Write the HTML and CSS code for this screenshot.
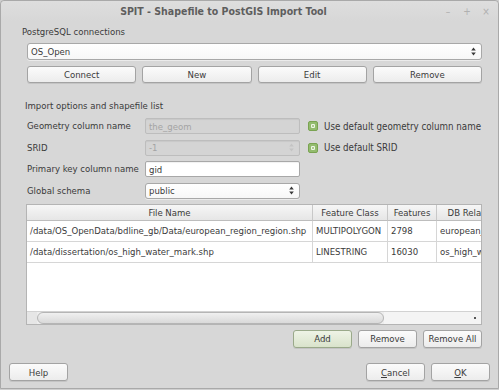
FILE: index.html
```html
<!DOCTYPE html>
<html>
<head>
<meta charset="utf-8">
<link rel="stylesheet" href="styles.css">
</head>
<body>
<div class="window">
  <div class="titlebar">
    <div class="title">SPIT - Shapefile to PostGIS Import Tool</div>
    <div class="controls">
      <span class="ctl">&#8211;</span><span class="ctl">+</span><span class="ctl">&#215;</span>
    </div>
  </div>
  <div class="content">
    <div class="section-label">PostgreSQL connections</div>
    <div class="combo combo-wide">
      <span>OS_Open</span>
      <svg class="arrows" width="5" height="9" viewBox="0 0 5 9"><path d="M2.5 0.5 L4.8 3.5 L0.2 3.5 Z M2.5 8.5 L4.8 5.5 L0.2 5.5 Z" fill="#3a3a3a"/></svg>
    </div>
    <div class="btnrow">
      <div class="btn">Connect</div>
      <div class="btn">New</div>
      <div class="btn">Edit</div>
      <div class="btn">Remove</div>
    </div>
    <div class="group-label">Import options and shapefile list</div>
    <div class="form">
      <div class="flabel">Geometry column name</div>
      <div class="field disabled">the_geom</div>
      <div class="check">
        <svg width="10" height="10" viewBox="0 0 10 10"><rect x="0.5" y="0.5" width="9" height="9" rx="1.5" fill="#93bb6e" stroke="#7aa352"/><rect x="3" y="3" width="4" height="4" fill="#eef5e6"/><path d="M3.6 3.6 L6.4 6.4 M6.4 3.6 L3.6 6.4" stroke="#9cc07a" stroke-width="0.8"/></svg>
        <span>Use default geometry column name</span>
      </div>

      <div class="flabel">SRID</div>
      <div class="field disabled spin">
        <span>-1</span>
        <svg class="arrows" width="5" height="9" viewBox="0 0 5 9"><path d="M2.5 0.5 L4.8 3.5 L0.2 3.5 Z M2.5 8.5 L4.8 5.5 L0.2 5.5 Z" fill="#c4c4c4"/></svg>
      </div>
      <div class="check">
        <svg width="10" height="10" viewBox="0 0 10 10"><rect x="0.5" y="0.5" width="9" height="9" rx="1.5" fill="#93bb6e" stroke="#7aa352"/><rect x="3" y="3" width="4" height="4" fill="#eef5e6"/><path d="M3.6 3.6 L6.4 6.4 M6.4 3.6 L3.6 6.4" stroke="#9cc07a" stroke-width="0.8"/></svg>
        <span>Use default SRID</span>
      </div>

      <div class="flabel">Primary key column name</div>
      <div class="field">gid</div>
      <div></div>

      <div class="flabel">Global schema</div>
      <div class="combo">
        <span>public</span>
        <svg class="arrows" width="5" height="9" viewBox="0 0 5 9"><path d="M2.5 0.5 L4.8 3.5 L0.2 3.5 Z M2.5 8.5 L4.8 5.5 L0.2 5.5 Z" fill="#3a3a3a"/></svg>
      </div>
      <div></div>
    </div>

    <div class="table">
      <div class="grid">
        <div class="th">File Name</div>
        <div class="th">Feature Class</div>
        <div class="th">Features</div>
        <div class="th">DB Relation Name</div>

        <div class="td">/data/OS_OpenData/bdline_gb/Data/european_region_region.shp</div>
        <div class="td">MULTIPOLYGON</div>
        <div class="td">2798</div>
        <div class="td">european_region_region</div>

        <div class="td">/data/dissertation/os_high_water_mark.shp</div>
        <div class="td">LINESTRING</div>
        <div class="td">16030</div>
        <div class="td">os_high_water_mark</div>
      </div>
      <div class="hscroll">
        <div class="sb-left"></div>
        <div class="sb-handle"></div>
        <div class="sb-track"><span class="sb-dot"></span></div>
      </div>
    </div>

    <div class="addrow">
      <div class="btn small add">Add</div>
      <div class="btn small">Remove</div>
      <div class="btn small">Remove All</div>
    </div>
  </div>
  <div class="footer">
    <div class="btn small">Help</div>
    <div class="spacer"></div>
    <div class="btn small"><u>C</u>ancel</div>
    <div class="btn small"><u>O</u>K</div>
  </div>
</div>
</body>
</html>
```

FILE: styles.css
```css
html, body {
  margin: 0;
  padding: 0;
}
body {
  width: 499px;
  height: 390px;
  overflow: hidden;
  background: #cfcfcf;
  font-family: "DejaVu Sans Condensed", "DejaVu Sans", sans-serif;
  font-stretch: condensed;
  font-size: 9.5px;
  color: #3a3a3a;
}
.window {
  box-sizing: border-box;
  width: 499px;
  height: 389px;
  background: #d7d7d7;
  border: 1px solid #a9a9a9;
  border-radius: 4px 4px 0 0;
  display: flex;
  flex-direction: column;
}
.titlebar {
  height: 20px;
  display: flex;
  align-items: center;
  background: linear-gradient(#dedede, #d7d7d7);
  border-radius: 4px 4px 0 0;
}
.title {
  flex: 1;
  text-align: center;
  font-weight: bold;
  font-size: 10.5px;
  color: #5e5e5e;
  padding-left: 4px;
}
.controls {
  width: 50px;
  display: flex;
  justify-content: space-between;
  padding-right: 6px;
  color: #b0b0b0;
  font-size: 10px;
}
.ctl {
  width: 12px;
  text-align: center;
}
.content {
  padding: 0 16px 0 26px;
  display: flex;
  flex-direction: column;
}
.section-label {
  margin-top: 4px;
  margin-left: -5px;
  line-height: 14px;
}
.combo {
  box-sizing: border-box;
  height: 17px;
  background: linear-gradient(#ffffff, #f7f7f7);
  border: 1px solid #a8a8a8;
  border-radius: 3px;
  display: flex;
  align-items: center;
  justify-content: space-between;
  padding: 0 5px 0 3px;
  box-shadow: 0 1px 0 rgba(255,255,255,0.5);
}
.combo-wide {
  margin-top: 4px;
}
.arrows {
  display: block;
}
.btnrow {
  margin-top: 6px;
  display: grid;
  grid-template-columns: repeat(4, 1fr);
  column-gap: 6px;
}
.btn {
  box-sizing: border-box;
  height: 17px;
  display: flex;
  align-items: center;
  justify-content: center;
  background: linear-gradient(#fbfbfb, #ececec);
  border: 1px solid #a3a3a3;
  border-radius: 3px;
  box-shadow: 0 1px 0 #c4c4c4;
  color: #3a3a3a;
}
.btn u {
  text-decoration: underline;
}
.group-label {
  margin-top: 16px;
  margin-left: -2px;
  line-height: 14px;
}
.form {
  margin-top: 5px;
  display: grid;
  grid-template-columns: 118px 155px auto;
  grid-auto-rows: 16px;
  row-gap: 5.5px;
  align-items: center;
}
.flabel {
  line-height: 16px;
}
.field {
  box-sizing: border-box;
  height: 16px;
  background: #ffffff;
  border: 1px solid #a8a8a8;
  border-radius: 2px;
  display: flex;
  align-items: center;
  justify-content: space-between;
  padding: 0 5px 0 3px;
  box-shadow: inset 0 1px 1px rgba(0,0,0,0.06);
}
.field.disabled {
  background: #d4d4d4;
  border-color: #bdbdbd;
  color: #a4a4a4;
}
.form .combo {
  height: 16px;
}
.check {
  display: flex;
  align-items: center;
  margin-left: 8px;
  gap: 6px;
  font-size: 9.7px;
}
.check svg {
  display: block;
}
.table {
  margin-top: 5px;
  margin-left: -1px;
  height: 121px;
  box-sizing: border-box;
  background: #ffffff;
  border: 1px solid #b4b4b4;
  display: flex;
  flex-direction: column;
  overflow: hidden;
}
.grid {
  flex: 1;
  display: grid;
  grid-template-columns: 286px 75px 49px 100px;
  grid-template-rows: 16px 21px 21px;
  align-content: start;
  overflow: hidden;
  width: 100%;
}
.th {
  background: linear-gradient(#f6f6f6, #e6e6e6);
  border-right: 1px solid #c8c8c8;
  border-bottom: 1px solid #bdbdbd;
  text-align: center;
  line-height: 15px;
  white-space: nowrap;
  overflow: hidden;
}
.td {
  border-right: 1px solid #d6d6d6;
  border-bottom: 1px solid #d6d6d6;
  padding-left: 3px;
  line-height: 20px;
  white-space: nowrap;
  overflow: hidden;
}
.hscroll {
  height: 12px;
  display: flex;
  background: #ededed;
  border-top: 1px solid #d2d2d2;
}
.sb-left {
  width: 10px;
  background: #e6e6e6;
}
.sb-handle {
  width: 347px;
  box-sizing: border-box;
  border: 1px solid #b5b5b5;
  border-radius: 6px;
  background: linear-gradient(#f0f0f0, #d9d9d9);
}
.sb-track {
  flex: 1;
  position: relative;
  background: #f4f4f4;
}
.sb-dot {
  position: absolute;
  right: 5px;
  top: 5px;
  width: 2px;
  height: 2px;
  background: #555;
}
.addrow {
  margin-top: 5px;
  display: flex;
  justify-content: flex-end;
  gap: 6px;
}
.btn.small {
  width: 59px;
  height: 18px;
}
.btn.add {
  background: linear-gradient(#eef3e6, #d9e3cb);
  border-color: #9aa98a;
}
.footer {
  margin-top: auto;
  display: flex;
  padding: 0 8px 7px 8px;
  gap: 6px;
}
.footer .btn.small {
  height: 18px;
}
.spacer {
  flex: 1;
}
```
